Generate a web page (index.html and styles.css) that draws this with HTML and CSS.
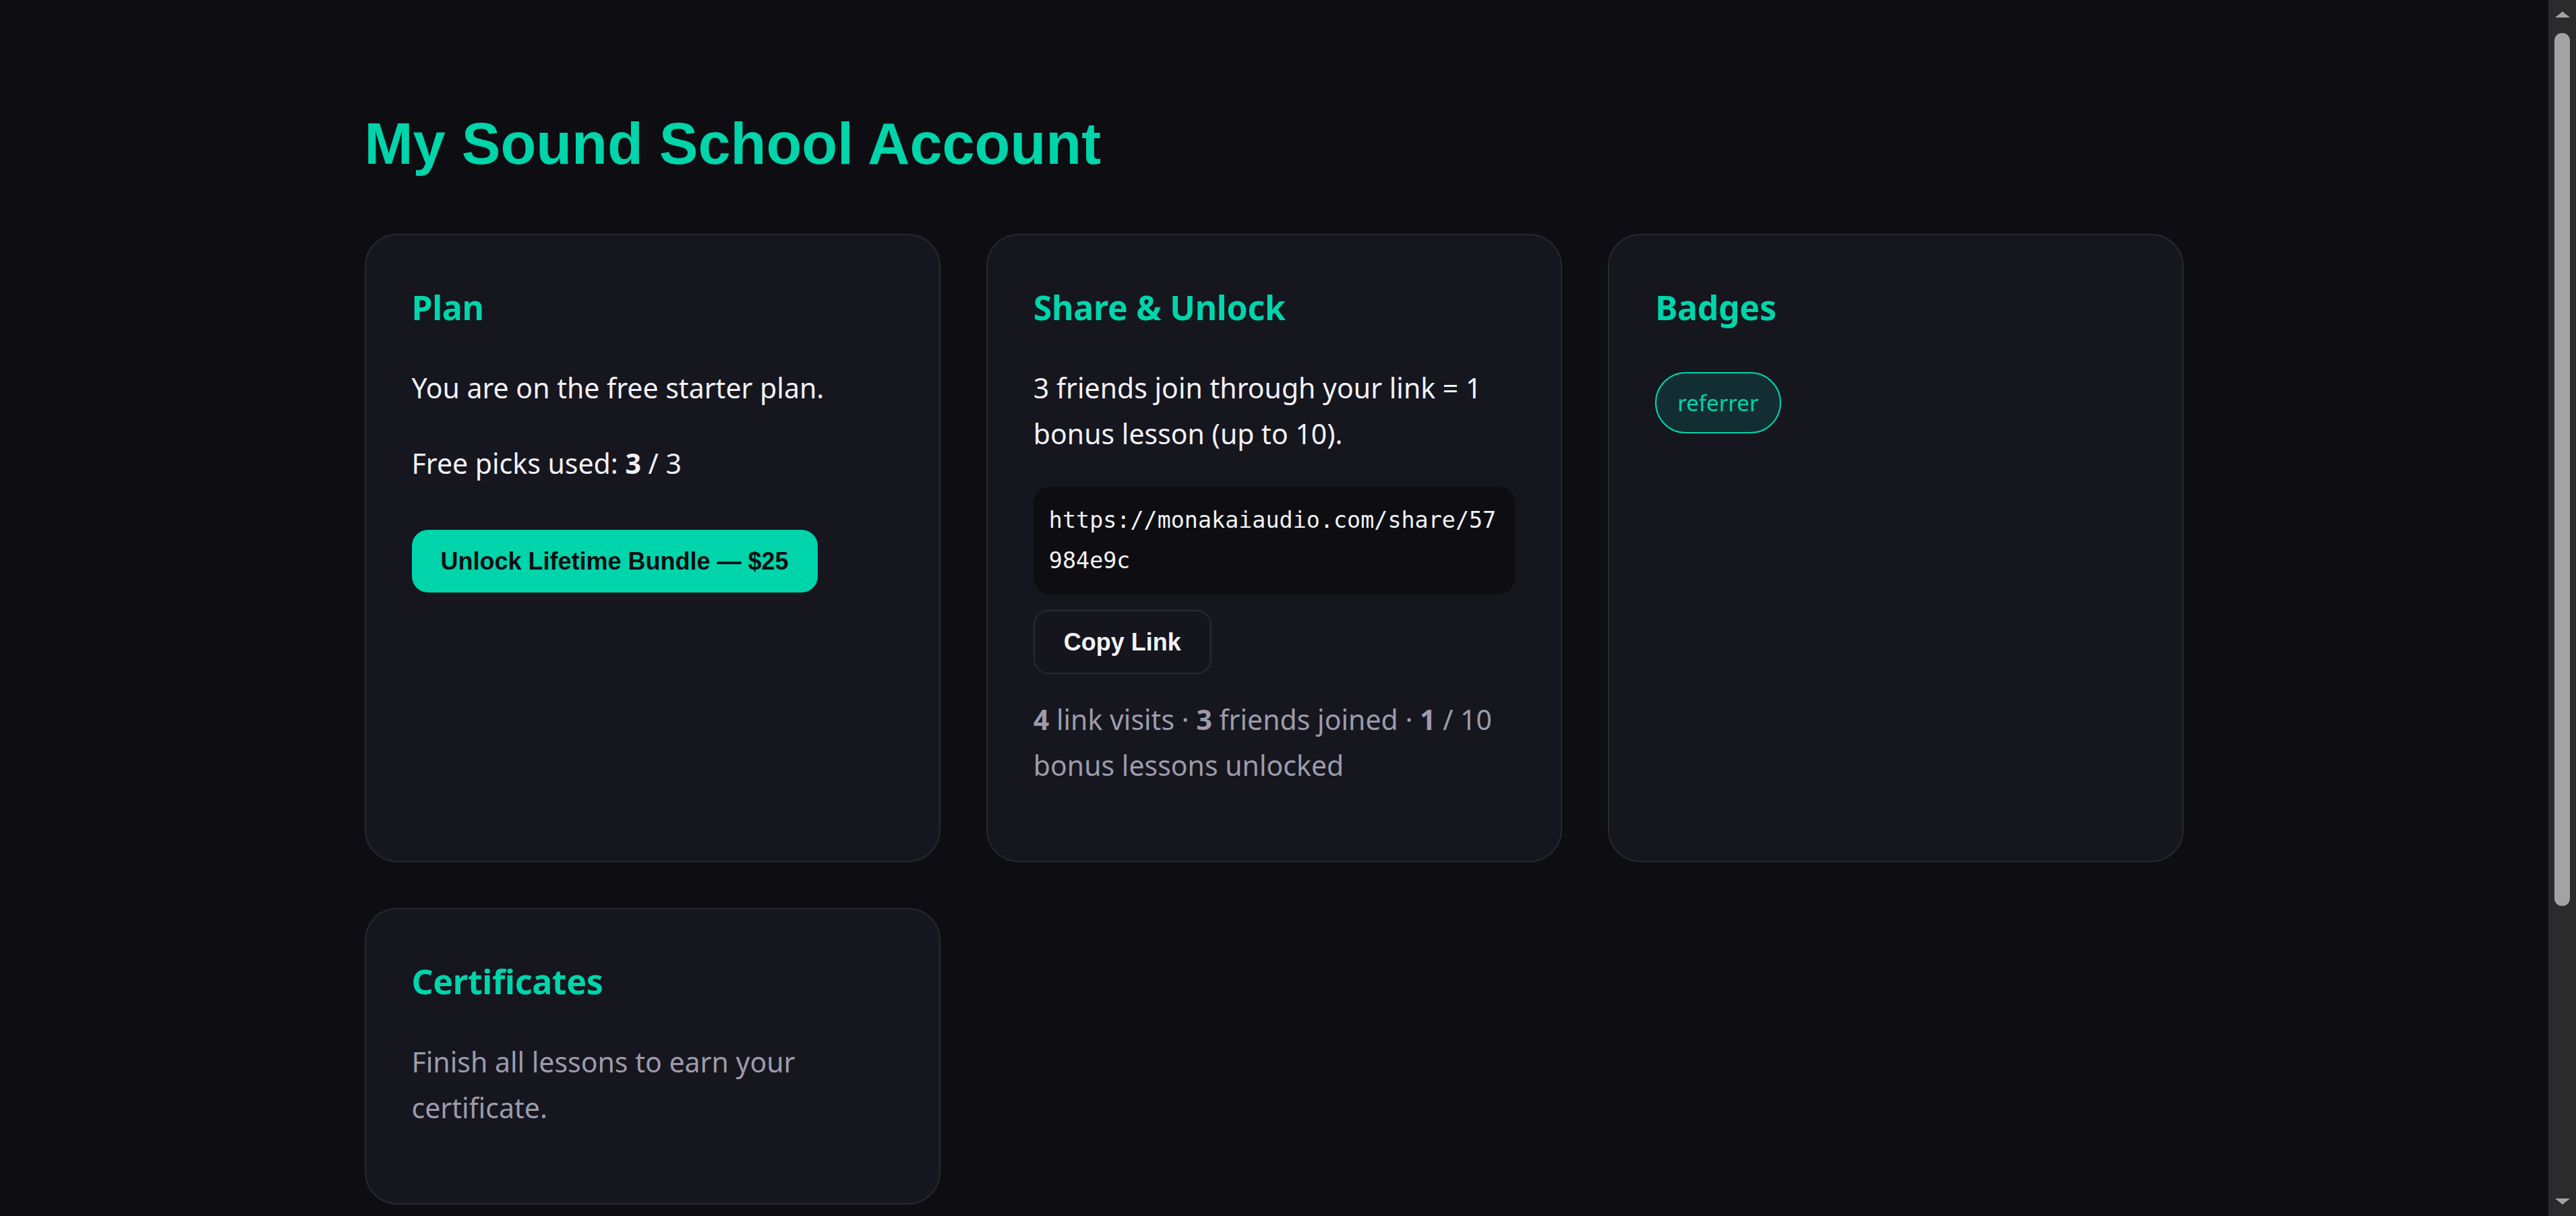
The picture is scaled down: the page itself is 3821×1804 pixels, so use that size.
FILE: index.html
```html
<!DOCTYPE html>
<html lang="en">
<head>
  <meta charset="UTF-8">
  <meta name="viewport" content="width=device-width, initial-scale=1.0">
  <title>My Sound School Account</title>
  <link rel="stylesheet" href="styles.css">
</head>
<body>
  <div class="viewport">
    <main class="account">
      <h1 class="page-title">My Sound School Account</h1>

      <div class="cards">
        <section class="card">
          <h2>Plan</h2>
          <p>You are on the free starter plan.</p>
          <p>Free picks used: <strong>3</strong> / 3</p>
          <button class="btn btn-primary">Unlock Lifetime Bundle — $25</button>
        </section>

        <section class="card">
          <h2>Share &amp; Unlock</h2>
          <p>3 friends join through your link = 1 bonus lesson (up to 10).</p>
          <div class="share-link" id="shareLink">https://monakaiaudio.com/share/57984e9c</div>
          <button class="btn btn-ghost" id="copyLink">Copy Link</button>
          <p class="muted stats"><strong>4</strong> link visits · <strong>3</strong> friends joined · <strong>1</strong> / 10 bonus lessons unlocked</p>
        </section>

        <section class="card">
          <h2>Badges</h2>
          <div class="badges">
            <span class="badge">referrer</span>
          </div>
        </section>

        <section class="card">
          <h2>Certificates</h2>
          <p class="muted">Finish all lessons to earn your certificate.</p>
        </section>
      </div>
    </main>
  </div>

  <!-- dark scroll rail next to the page -->
  <div class="scrollbar">
    <span class="scroll-arrow up"></span>
    <div class="scroll-thumb"></div>
    <span class="scroll-arrow down"></span>
  </div>

  <script>
    document.getElementById("copyLink").addEventListener("click", () => {
      const link = document.getElementById("shareLink").textContent;
      if (navigator.clipboard) {
        navigator.clipboard.writeText(link);
      }
    });
  </script>
</body>
</html>
```

FILE: styles.css
```css
body {
  display: flex;
  height: 100vh;
  margin: 0;
  overflow: hidden;
  background-color: #0e0e12;
  color: #f2f2f6;
  font-family: "Segoe UI", "Noto Sans", sans-serif;
  font-size: 41px;
  line-height: 68px;
}

.viewport {
  flex: 1;
  overflow-y: auto;
  scrollbar-width: none;
}

.scrollbar {
  display: flex;
  flex-direction: column;
  align-items: center;
  width: 41px;
  padding: 17px 0;
  box-sizing: border-box;
  background-color: #2b2b2b;
}

.scroll-arrow {
  width: 0;
  height: 0;
  border-left: 11px solid transparent;
  border-right: 11px solid transparent;
}

.scroll-arrow.up {
  border-bottom: 9px solid #a3a3a3;
}

.scroll-arrow.down {
  margin-top: auto;
  border-top: 9px solid #a3a3a3;
}

.scroll-thumb {
  width: 23px;
  height: 1295px;
  margin-top: 23px;
  border-radius: 11px;
  background-color: #a3a3a3;
}

.account {
  max-width: 2699px;
  margin: 0 auto;
  padding: 164px 0 613px;
}

.page-title {
  margin: 0 0 84px;
  color: #00d4aa;
  font-family: Arial, "Liberation Sans", sans-serif;
  font-size: 86.5px;
  font-weight: bold;
  line-height: 99px;
}

.cards {
  display: grid;
  grid-template-columns: repeat(3, 1fr);
  gap: 68px;
}

.card {
  display: flex;
  flex-direction: column;
  align-items: flex-start;
  padding: 68px 68px 64px;
  background-color: #16161f;
  border: 2px solid #282833;
  border-radius: 48px;
}

.card h2 {
  margin: 0 0 46px;
  color: #00d4aa;
  font-size: 50px;
  font-weight: bold;
  line-height: 78px;
  letter-spacing: -0.3px;
}

.card p {
  margin: 0 0 44px;
}

.card p strong {
  font-weight: bold;
}

.muted {
  color: #9d9bab;
}

.btn {
  font-family: Arial, "Liberation Sans", sans-serif;
  font-size: 36px;
  font-weight: bold;
  line-height: 1.15;
  cursor: pointer;
}

.btn-primary {
  margin-top: 21px;
  padding: 26px 43px;
  border: 0;
  border-radius: 24px;
  background-color: #00d4aa;
  color: #0e0e12;
}

.btn-ghost {
  margin-top: 23px;
  padding: 25px 43px;
  border: 2px solid #2a2a35;
  border-radius: 22px;
  background-color: #15151d;
  color: #f2f2f6;
}

.share-link {
  align-self: stretch;
  margin-top: 1px;
  padding: 20px 23px;
  background-color: #0e0e12;
  border-radius: 24px;
  font-family: Consolas, "DejaVu Sans Mono", monospace;
  font-size: 33.4px;
  line-height: 60px;
  word-break: break-all;
}

.card .stats {
  margin-top: 33px;
}

.badges {
  display: flex;
  flex-wrap: wrap;
  gap: 20px;
  margin-top: 11px;
}

.badge {
  padding: 14px 31px;
  border: 2px solid #00d4aa;
  border-radius: 999px;
  background-color: #122e33;
  color: #00d4aa;
  font-size: 33px;
  line-height: 59px;
}
```
